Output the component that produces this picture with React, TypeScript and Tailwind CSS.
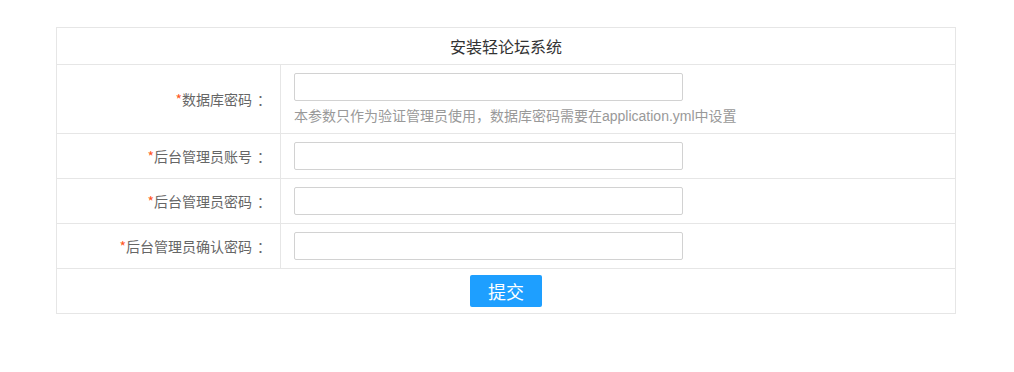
import React from "react";

const font = { fontFamily: '"Noto Sans CJK SC", "Noto Sans", sans-serif' };

function Label({ text }: { text: string }) {
  return (
    <div className="w-[224px] shrink-0 border-r border-[#e6e6e6] flex items-center justify-end pr-[9px] text-[14px] text-[#666]">
      <span className="text-[#ff5722]">*</span>
      {text}
      <span className="pl-[5px]">：</span>
    </div>
  );
}

function Input() {
  return (
    <input
      type="text"
      className="block w-[389px] h-[28px] border border-[#d2d2d2] rounded-[2px] bg-white outline-none"
    />
  );
}

export default function App() {
  return (
    <div className="w-full bg-white pt-[27px] pb-[58px]" style={font}>
      <div className="ml-[56px] w-[900px] border border-[#e6e6e6]">
        <div className="h-[37px] flex items-center justify-center text-[16px] font-normal text-[#333] border-b border-[#e6e6e6]">
          安装轻论坛系统
        </div>
        <div className="flex border-b border-[#e6e6e6]">
          <Label text="数据库密码" />
          <div className="pl-[13px] pt-[8px] pb-[8px] h-[68px]">
            <Input />
            <div
              className="mt-[5px] text-[14px] leading-[20px] text-[#999]"
              style={{ fontFamily: '"Liberation Sans", "Noto Sans CJK SC", sans-serif' }}
            >
              本参数只作为验证管理员使用，数据库密码需要在application.yml中设置
            </div>
          </div>
        </div>
        {["后台管理员账号", "后台管理员密码", "后台管理员确认密码"].map((t) => (
          <div key={t} className="flex border-b border-[#e6e6e6] h-[45px]">
            <Label text={t} />
            <div className="pl-[13px] flex items-center">
              <Input />
            </div>
          </div>
        ))}
        <div className="h-[44px] flex items-center justify-center">
          <button className="w-[72px] h-[32px] bg-[#1e9fff] text-white text-[18px] rounded-[2px] leading-[32px]">
            提交
          </button>
        </div>
      </div>
    </div>
  );
}
